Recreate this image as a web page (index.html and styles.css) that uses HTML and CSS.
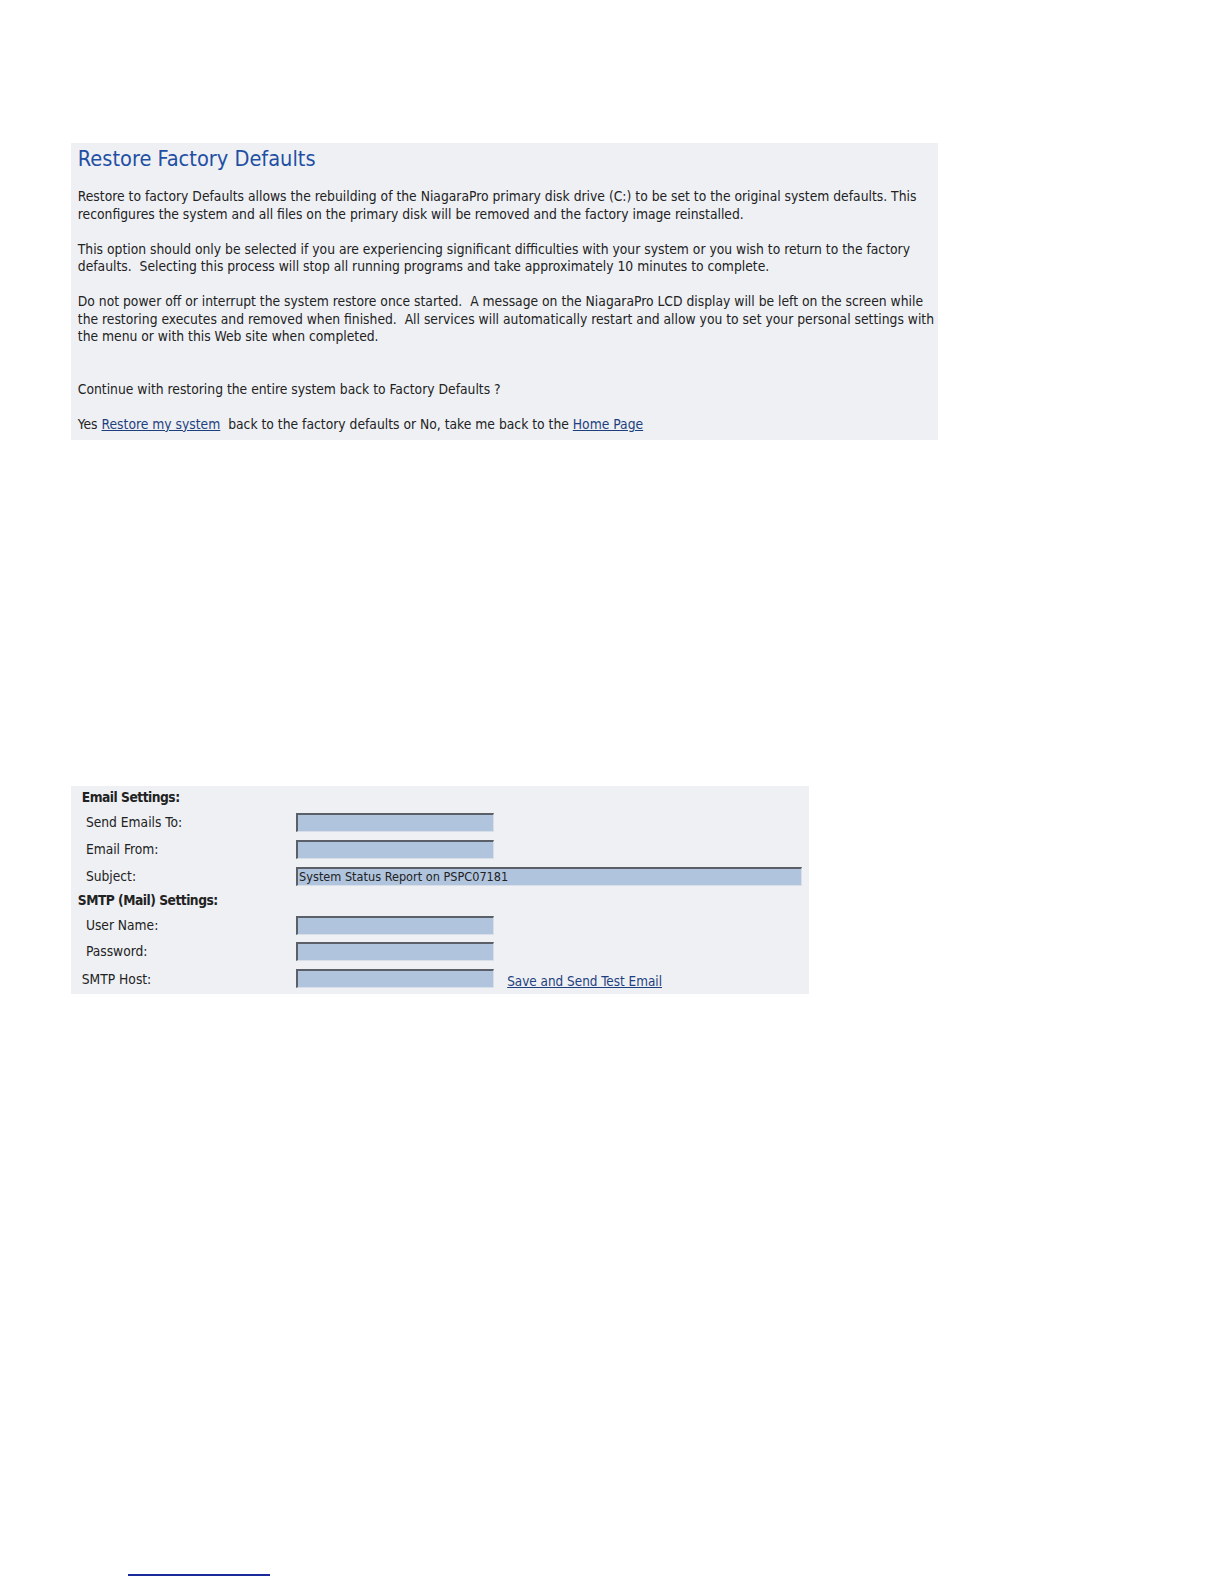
FILE: index.html
```html
<!DOCTYPE html>
<html>
<head>
<meta charset="utf-8">
<link rel="stylesheet" href="styles.css">
</head>
<body>
<div class="page">
  <section class="panel restore">
    <h1 class="title">Restore Factory Defaults</h1>
    <p>Restore to factory Defaults allows the rebuilding of the NiagaraPro primary disk drive (C:) to be set to the original system defaults. This<br>reconfigures the system and all files on the primary disk will be removed and the factory image reinstalled.</p>
    <p>This option should only be selected if you are experiencing significant difficulties with your system or you wish to return to the factory<br>defaults.&nbsp; Selecting this process will stop all running programs and take approximately 10 minutes to complete.</p>
    <p>Do not power off or interrupt the system restore once started.&nbsp; A message on the NiagaraPro LCD display will be left on the screen while<br>the restoring executes and removed when finished.&nbsp; All services will automatically restart and allow you to set your personal settings with<br>the menu or with this Web site when completed.</p>
    <p class="gap">Continue with restoring the entire system back to Factory Defaults ?</p>
    <p>Yes <a href="#">Restore my system</a>&nbsp; back to the factory defaults or No, take me back to the <a href="#">Home Page</a></p>
  </section>

  <section class="panel email">
    <div class="row r1"><span class="lbl l-head">Email Settings:</span></div>
    <div class="row r2"><span class="lbl l-ind">Send Emails To:</span><span class="field"></span></div>
    <div class="row r3"><span class="lbl l-ind">Email From:</span><span class="field"></span></div>
    <div class="row r4"><span class="lbl l-ind">Subject:</span><span class="field wide">System Status Report on PSPC07181</span></div>
    <div class="row r5"><span class="lbl l-smtp">SMTP (Mail) Settings:</span></div>
    <div class="row r6"><span class="lbl l-ind">User Name:</span><span class="field"></span></div>
    <div class="row r7"><span class="lbl l-ind">Password:</span><span class="field"></span></div>
    <div class="row r8"><span class="lbl l-host">SMTP Host:</span><span class="field"></span><a class="test" href="#">Save and Send Test Email</a></div>
  </section>

  <div class="footrule"></div>
</div>
</body>
</html>
```

FILE: styles.css
```css
html {
  overflow: hidden;
}

html, body {
  margin: 0;
  padding: 0;
  background: #ffffff;
}

.page {
  padding: 142.5px 0 0 70.7px;
  font-family: "DejaVu Sans Condensed", "DejaVu Sans", sans-serif;
  color: #222222;
}

.panel {
  background: #eef0f4;
  box-sizing: border-box;
}

.restore {
  width: 867px;
  height: 297px;
  padding: 3.2px 0 0 7.1px;
  font-size: 13.75px;
}

.title {
  margin: 0 0 16.6px 0;
  font-family: "DejaVu Sans Condensed", "DejaVu Sans", sans-serif;
  font-weight: normal;
  font-size: 21.6px;
  line-height: 26px;
  color: #1f4fa3;
}

.restore p {
  margin: 0 0 17.5px 0;
  line-height: 17.5px;
}

.restore p.gap {
  margin-top: 35px;
}

.restore a {
  color: #1e3f7e;
  text-decoration: underline;
}

.email {
  margin-top: 346.7px;
  width: 738.8px;
  height: 208.2px;
  display: flex;
  flex-direction: column;
  font-size: 13.7px;
}

.row {
  display: flex;
  align-items: center;
  flex: none;
}

.r1 { height: 22.2px; }
.r2 { height: 27.3px; }
.r3 { height: 27.3px; }
.r4 { height: 26.3px; }
.r5 { height: 22.2px; }
.r6 { height: 27.3px; }
.r7 { height: 25.3px; }
.r8 { height: 29.3px; }

.lbl {
  width: 225.4px;
  flex: none;
  box-sizing: border-box;
}

.l-head { padding-left: 11.1px; font-weight: bold; letter-spacing: -0.5px; }
.l-smtp { padding-left: 7.1px; font-weight: bold; letter-spacing: -0.5px; }
.l-ind { padding-left: 15.2px; }
.l-host { padding-left: 11.1px; }

.field {
  display: block;
  box-sizing: border-box;
  width: 198px;
  height: 19px;
  background: #b0c4de;
  border-top: 2px solid #5b6068;
  border-left: 2px solid #5b6068;
  border-right: 1px solid #d8dfe8;
  border-bottom: 1px solid #d8dfe8;
  font-size: 12.6px;
  line-height: 16px;
  padding-left: 1px;
  white-space: nowrap;
}

.field.wide {
  width: 506px;
}

.test {
  margin-left: 13.1px;
  margin-top: 6px;
  font-size: 13.4px;
  color: #1e3f7e;
  text-decoration: underline;
}

.footrule {
  margin: 580px 0 0 57.6px;
  width: 141.5px;
  height: 2px;
  background: #1a2a9c;
}
```
